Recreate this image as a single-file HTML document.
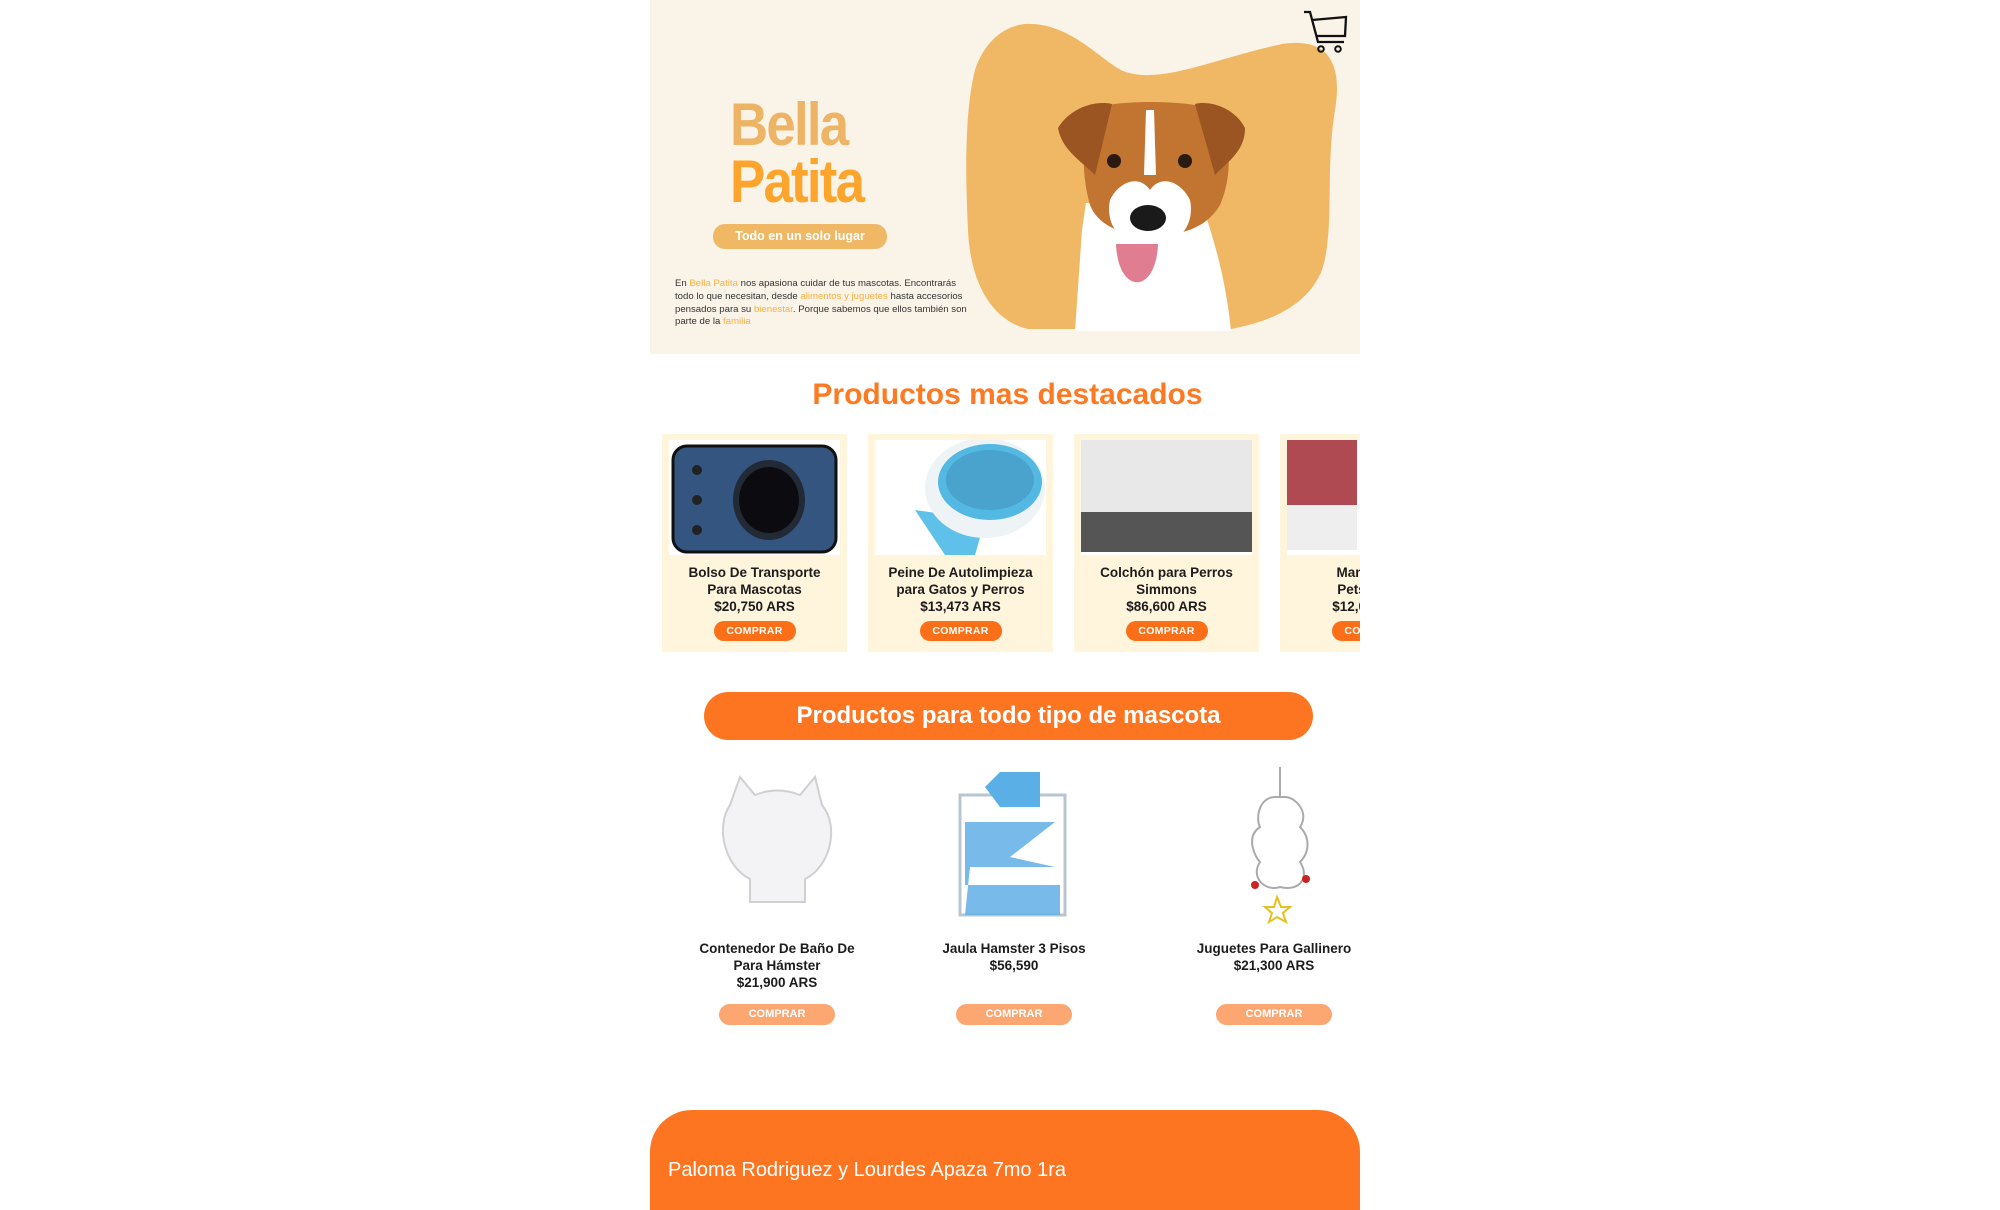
<!DOCTYPE html>
<html><head><meta charset="utf-8"><style>
*{margin:0;padding:0;box-sizing:border-box}
body{width:2000px;height:1200px;background:#fff;position:relative;overflow:hidden;font-family:"Liberation Sans",sans-serif}
.abs{position:absolute}
.hero{left:650px;top:0;width:710px;height:354px;background:#faf3e8;overflow:hidden}
.card{position:absolute;width:185px;height:218px;background:#fff4dc;text-align:center;font-weight:bold;font-size:13.5px;color:#1c1c1c;line-height:17px}
.card .img{position:absolute;left:7px;top:6px;width:171px;height:115px;background:#fff;overflow:hidden}
.card .t{position:absolute;top:130px;left:0;width:185px}
.btn{display:inline-block;background:#fb6f18;color:#fff;font-size:10.5px;font-weight:bold;border-radius:11px;width:82px;height:20px;line-height:20px;letter-spacing:.3px}
.p{position:absolute;width:200px;text-align:center;font-weight:bold;font-size:13.5px;color:#1c1c1c;line-height:17px}
.btn2{position:absolute;top:1004px;width:116px;height:21px;line-height:21px;background:#fca772;color:#fff;font-size:11px;font-weight:bold;border-radius:11px;text-align:center}
.big{position:absolute;left:80px;font-weight:bold;font-size:60px;line-height:60px;letter-spacing:-2px;transform-origin:0 0;transform:scaleX(.88)}
</style></head><body>
<div class="abs hero">
 <svg class="abs" style="left:0;top:0" width="710" height="354">
  <path d="M375 24 C420 22 450 60 473 71 C510 85 560 60 632 44 C690 35 690 80 685 110 C675 170 685 230 672 270 C660 300 630 320 581 329 L378 329 C340 320 320 280 318 230 C315 170 315 110 325 70 C335 40 355 26 375 24Z" fill="#f0b865"/>
  <path d="M425 331 L432 230 L436 203 L552 203 C560 230 575 270 581 331Z" fill="#fff"/>
  <path d="M445 108 C470 100 530 100 560 108 C580 130 585 170 570 205 C555 230 530 235 500 236 C470 235 448 225 440 205 C430 170 432 130 445 108Z" fill="#c27530"/>
  <path d="M496 110 L504 110 L506 175 L494 175Z" fill="#fff"/>
  <path d="M460 200 C470 180 490 175 500 190 C510 175 530 180 540 200 C545 225 530 245 500 248 C470 245 455 225 460 200Z" fill="#fff"/>
  <path d="M408 128 C420 108 445 100 462 104 L445 175 C430 160 412 150 408 128Z" fill="#9a5522"/>
  <path d="M595 128 C585 108 560 100 545 104 L565 175 C580 160 595 150 595 128Z" fill="#9a5522"/>
  <circle cx="464" cy="161" r="7" fill="#2a1a10"/><circle cx="535" cy="161" r="7" fill="#2a1a10"/>
  <ellipse cx="498" cy="218" rx="18" ry="13" fill="#1a1a1a"/>
  <path d="M466 244 C468 295 506 295 508 244Z" fill="#e07d90"/>
 </svg>
 <div class="big" style="top:95px;color:#eeb465">Bella</div>
 <div class="big" style="top:152px;color:#fda42d">Patita</div>
 <div class="abs" style="left:63px;top:224px;width:174px;height:25px;border-radius:12px;background:#f0b865;color:#fff;font-weight:bold;font-size:12.5px;line-height:25px;text-align:center">Todo en un solo lugar</div>
 <div class="abs" style="left:25px;top:278px;width:300px;font-size:9.6px;line-height:12.8px;color:#333">En <span style="color:#fdb040">Bella Patita</span> nos apasiona cuidar de tus mascotas. Encontrarás todo lo que necesitan, desde <span style="color:#fdb040">alimentos y juguetes</span> hasta accesorios pensados para su <span style="color:#fdb040">bienestar</span>. Porque sabemos que ellos también son parte de la <span style="color:#fdb040">familia</span></div>
 <svg class="abs" style="left:650px;top:8px" width="50" height="46"><path d="M4 4 H10 L18 34 H44 M12 12 L46 9 L45 28 H16" fill="none" stroke="#111" stroke-width="2.3"/><circle cx="21" cy="41" r="2.8" fill="none" stroke="#111" stroke-width="2"/><circle cx="38" cy="41" r="2.8" fill="none" stroke="#111" stroke-width="2"/></svg>
</div>
<div class="abs" style="left:650px;width:715px;top:378px;text-align:center;font-size:30px;font-weight:bold;color:#fd7a22">Productos mas destacados</div>
<div class="abs" style="left:650px;top:430px;width:710px;height:230px;overflow:hidden">
 <div class="card" style="left:12px;top:4px"><div class="img"><svg width="171" height="115"><rect x="4" y="6" width="163" height="106" rx="14" fill="#34557f" stroke="#111" stroke-width="3"/><ellipse cx="100" cy="60" rx="36" ry="40" fill="#222a36"/><ellipse cx="100" cy="60" rx="30" ry="33" fill="#0c0c10"/><circle cx="28" cy="30" r="5" fill="#222"/><circle cx="28" cy="60" r="5" fill="#222"/><circle cx="28" cy="90" r="5" fill="#222"/></svg></div><div class="t">Bolso De Transporte<br>Para Mascotas<br>$20,750 ARS<div style="margin-top:6px"><span class="btn">COMPRAR</span></div></div></div>
 <div class="card" style="left:218px;top:4px"><div class="img"><svg width="171" height="115"><path d="M40 70 L70 115 L100 115 L110 80Z" fill="#5fc1ea"/><ellipse cx="110" cy="48" rx="60" ry="50" fill="#eef3f6"/><ellipse cx="115" cy="42" rx="52" ry="38" fill="#53b8e2"/><ellipse cx="115" cy="40" rx="44" ry="30" fill="#4aa3cc"/></svg></div><div class="t">Peine De Autolimpieza<br>para Gatos y Perros<br>$13,473 ARS<div style="margin-top:6px"><span class="btn">COMPRAR</span></div></div></div>
 <div class="card" style="left:424px;top:4px"><div class="img"><svg width="171" height="115"><rect x="0" y="0" width="171" height="80" fill="#e8e8e8"/><rect x="0" y="72" width="171" height="40" fill="#555"/></svg></div><div class="t">Colchón para Perros<br>Simmons<br>$86,600 ARS<div style="margin-top:6px"><span class="btn">COMPRAR</span></div></div></div>
 <div class="card" style="left:630px;top:4px"><div class="img"><svg width="171" height="115"><rect x="0" y="0" width="70" height="110" fill="#eee"/><rect x="0" y="0" width="70" height="65" fill="#b04a52"/></svg></div><div class="t">Manta Para<br>Pets Súper<br>$12,000 ARS<div style="margin-top:6px"><span class="btn">COMPRAR</span></div></div></div>
</div>
<div class="abs" style="left:704px;top:692px;width:609px;height:48px;border-radius:24px;background:#fd7520;color:#fff;font-weight:bold;font-size:24px;line-height:48px;text-align:center">Productos para todo tipo de mascota</div>
<svg class="abs" style="left:710px;top:767px" width="650" height="160">
 <path d="M20 38 L30 10 L45 28 C60 22 75 22 90 28 L105 10 L112 38 C130 60 120 100 95 112 L95 135 L40 135 L40 112 C15 100 5 60 20 38Z" fill="#f3f3f5" stroke="#d0d0d4" stroke-width="2"/>
 <rect x="250" y="28" width="105" height="120" fill="none" stroke="#b8c4d0" stroke-width="3"/><path d="M275 20 L290 5 L330 5 L330 40 L290 40Z" fill="#5ab0e6"/><path d="M255 55 H345 L300 90 L345 100 H260 L255 148 H350 V118 H255Z" fill="#60aee6" opacity=".85"/>
 <path d="M570 0 V30 M565 30 C550 30 545 50 550 60 C535 70 545 90 550 95 C540 110 555 125 570 120 C590 125 600 110 590 95 C600 85 600 70 590 60 C600 45 585 30 575 30Z" fill="#fff" stroke="#aaa" stroke-width="2"/><circle cx="545" cy="118" r="4" fill="#c22"/><circle cx="596" cy="112" r="4" fill="#c22"/><path d="M567 130 L571 140 L580 140 L573 146 L576 155 L567 150 L559 155 L562 146 L555 140 L564 140Z" fill="none" stroke="#e4c020" stroke-width="2"/>
</svg>
<div class="p" style="left:677px;top:940px">Contenedor De Baño De<br>Para Hámster<br>$21,900 ARS</div>
<div class="p" style="left:914px;top:940px">Jaula Hamster 3 Pisos<br>$56,590</div>
<div class="p" style="left:1174px;top:940px">Juguetes Para Gallinero<br>$21,300 ARS</div>
<div class="btn2" style="left:719px">COMPRAR</div>
<div class="btn2" style="left:956px">COMPRAR</div>
<div class="btn2" style="left:1216px">COMPRAR</div>
<div class="abs" style="left:650px;top:1110px;width:710px;height:100px;background:#fd7520;border-radius:42px 42px 0 0"></div>
<div class="abs" style="left:668px;top:1159px;color:#fff;font-size:20px;font-family:'Liberation Sans Narrow','Liberation Sans',sans-serif">Paloma Rodriguez y Lourdes Apaza 7mo 1ra</div>
</body></html>
